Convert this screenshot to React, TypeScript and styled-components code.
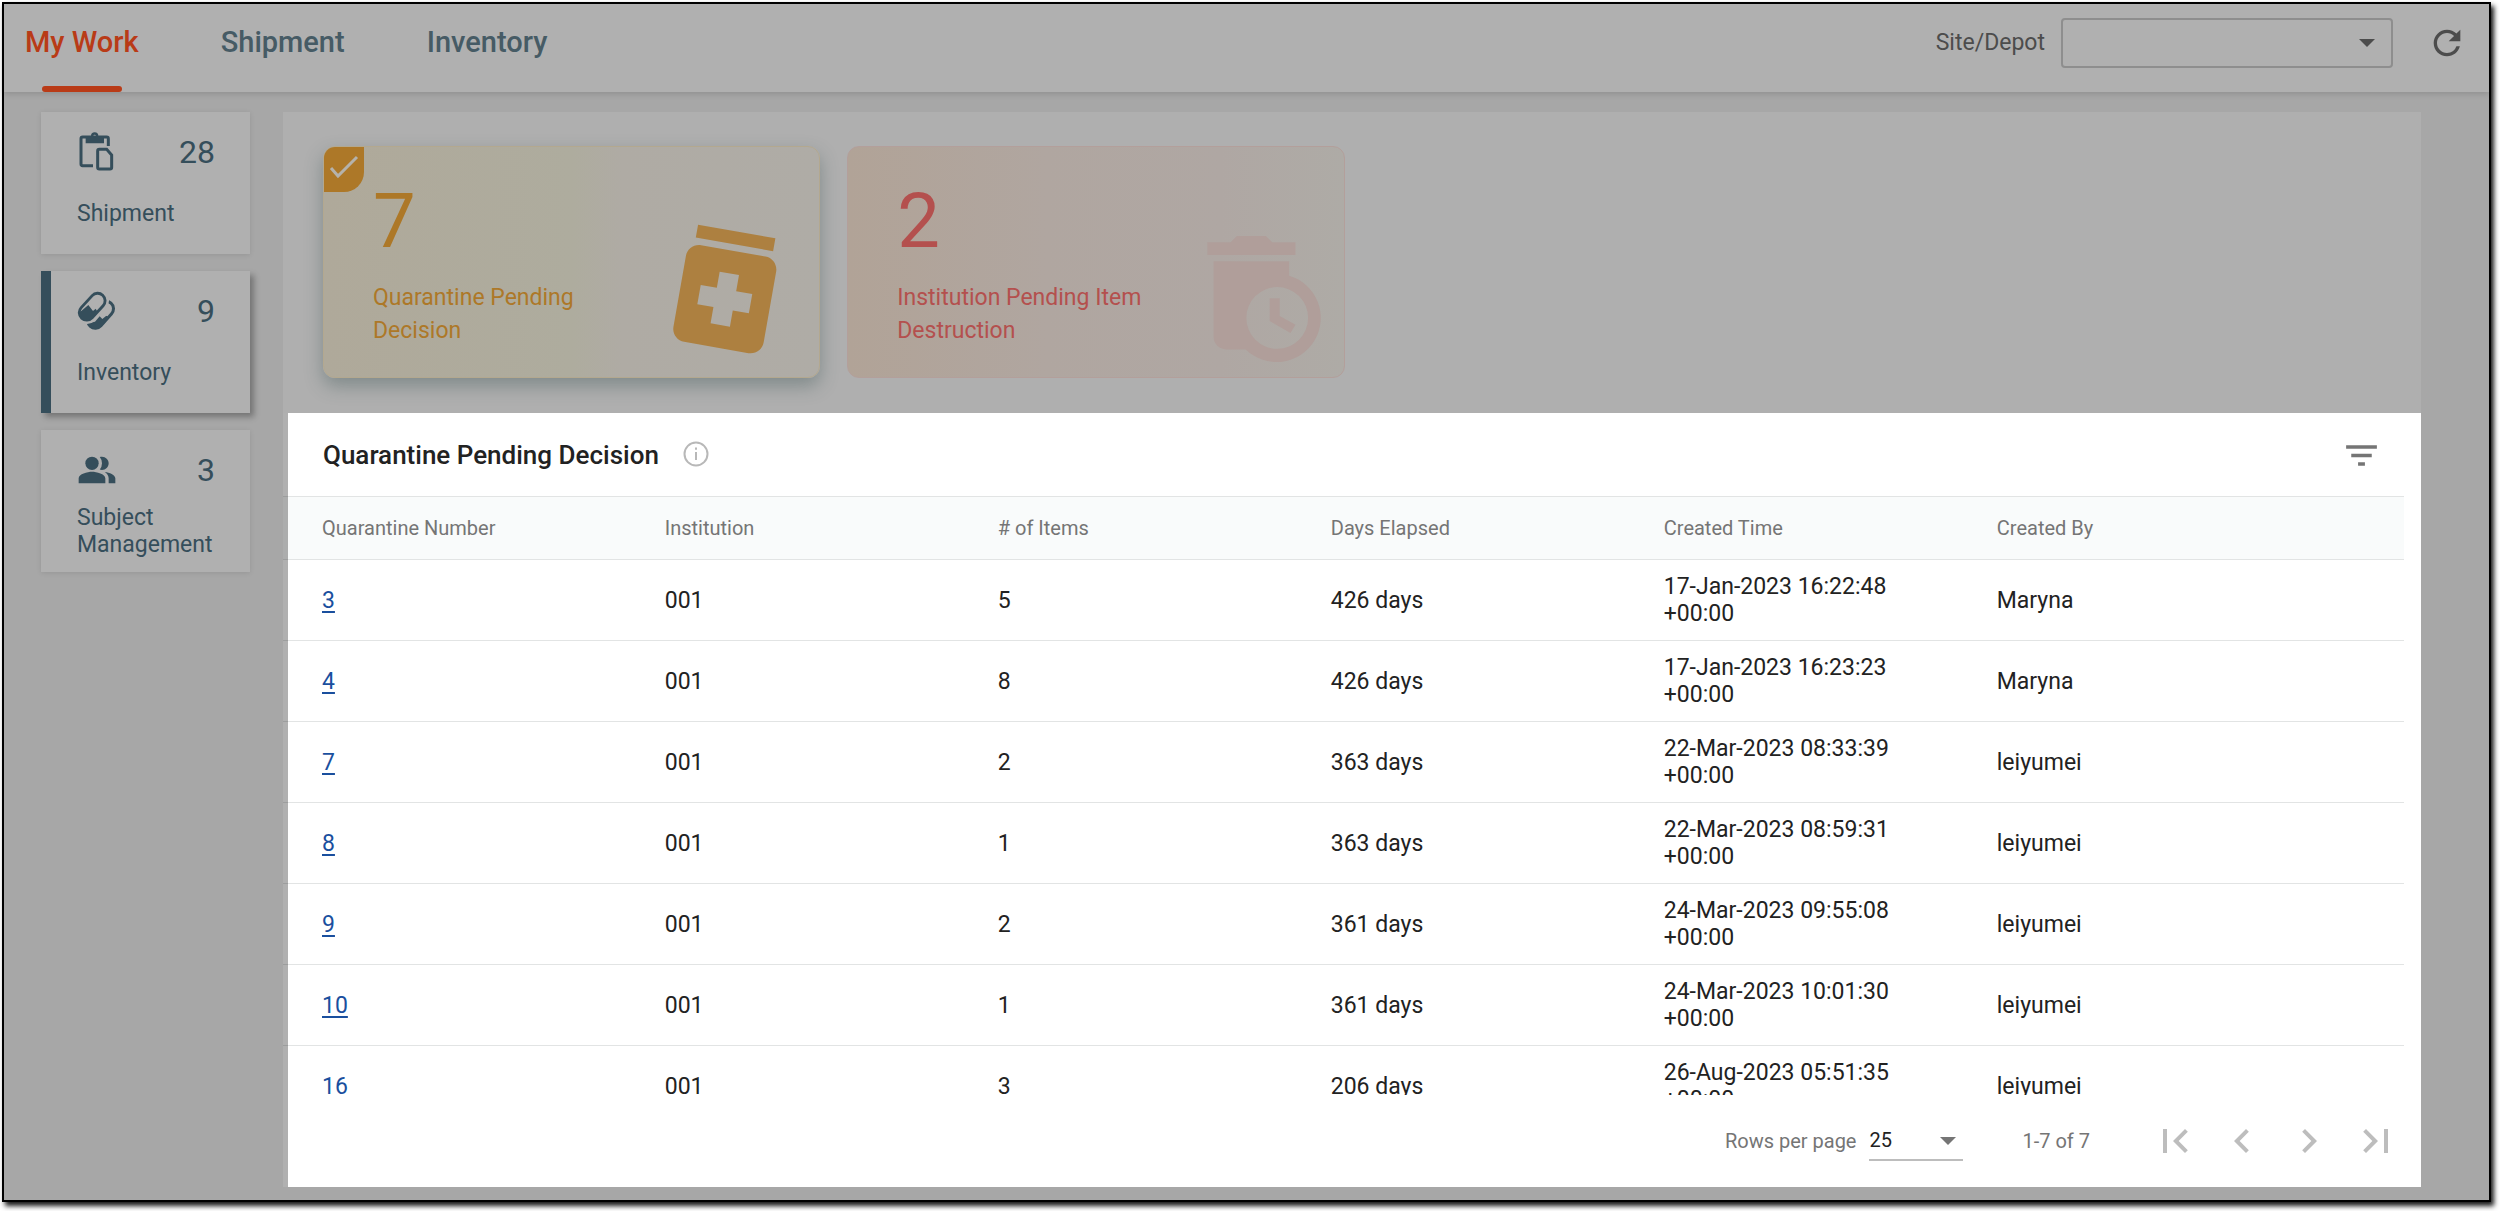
import { useState } from "react";
import styled, { createGlobalStyle, css } from "styled-components";
import {
  MdChevronLeft,
  MdChevronRight,
  MdFilterList,
  MdFirstPage,
  MdLastPage,
  MdPeopleAlt,
  MdRefresh,
} from "react-icons/md";

const colors = {
  page: "#a7a7a7",
  surface: "#b0b0b0",
  slate: "#354e5b",
  tab: "#465b65",
  active: "#b93b17",
  amber: "#ad7828",
  amberSoft: "#ad8040",
  red: "#b4504e",
  redSoft: "#b09e9a",
  text: "#222222",
  muted: "#757575",
  link: "#1a4f9e",
  line: "#e2e4e4",
};

const GlobalStyle = createGlobalStyle`
  * {
    box-sizing: border-box;
  }

  body {
    margin: 0;
    background: #ffffff;
    font-family: Roboto, "Liberation Sans", sans-serif;
    font-size: 23px;
    color: ${colors.text};
  }

  button, select {
    font: inherit;
    color: inherit;
    background: none;
    border: 0;
    padding: 0;
    text-align: left;
  }
`;

const Screen = styled.div`
  display: flex;
  height: 100vh;
  padding: 2px 9px 9px 2px;
`;

const Frame = styled.div`
  flex: 1;
  min-width: 0;
  display: flex;
  flex-direction: column;
  background: ${colors.page};
  border: 2px solid #000000;
  box-shadow: 3px 4px 5px rgba(0, 0, 0, 0.9);
`;

const Header = styled.header`
  position: relative;
  display: flex;
  justify-content: space-between;
  height: 88px;
  flex-shrink: 0;
  padding: 0 22px 0 21px;
  background: ${colors.surface};
  box-shadow: 0 2px 6px rgba(0, 0, 0, 0.14);
`;

const Tabs = styled.nav`
  display: flex;
  gap: 82px;
`;

const Tab = styled.a<{ $active?: boolean }>`
  display: flex;
  flex-direction: column;
  align-items: center;
  font-size: 29px;
  font-weight: 500;
  line-height: 77px;
  color: ${(props) => (props.$active ? colors.active : colors.tab)};
  text-decoration: none;
`;

const TabMarker = styled.span`
  width: 80px;
  height: 6px;
  margin-top: 5px;
  border-radius: 3px;
  background: ${colors.active};
`;

const Tools = styled.div`
  display: flex;
  align-items: center;
  height: 77px;
  color: #4c4c4c;
`;

const SelectWrapper = styled.span<{ $caret: string }>`
  position: relative;
  display: flex;

  svg {
    position: absolute;
    top: 50%;
    right: ${(props) => props.$caret};
    margin-top: -4px;
    pointer-events: none;
  }
`;

const SiteSelect = styled.select`
  appearance: none;
  width: 332px;
  height: 50px;
  margin-left: 16px;
  border: 2px solid #8e8e8e;
  border-radius: 4px;
`;

const IconButton = styled.button`
  display: flex;
  align-items: center;
  color: inherit;
`;

const RefreshButton = styled(IconButton)`
  margin-left: 34px;
`;

const Body = styled.div`
  flex: 1;
  min-height: 0;
  display: flex;
  gap: 33px;
  padding: 20px 68px 13px 37px;
`;

const Sidebar = styled.nav`
  display: flex;
  flex-direction: column;
  gap: 17px;
  width: 209px;
  flex-shrink: 0;
`;

const SideCard = styled.button<{ $selected?: boolean }>`
  height: 142px;
  padding: 20px 35px 14px 36px;
  background: ${colors.surface};
  color: ${colors.slate};
  box-shadow: 0 1px 5px rgba(0, 0, 0, 0.1);

  ${(props) =>
    props.$selected &&
    css`
      padding-left: 26px;
      border-left: 10px solid ${colors.slate};
      box-shadow: 4px 4px 6px rgba(0, 0, 0, 0.3);
    `}
`;

const SideTop = styled.span`
  display: flex;
  align-items: center;
  justify-content: space-between;
  height: 40px;
  font-size: 32px;
`;

const SideLabel = styled.span`
  display: flex;
  align-items: center;
  height: 54px;
  margin-top: 14px;
  line-height: 27px;
`;

const Panel = styled.main`
  flex: 1;
  min-width: 0;
  display: flex;
  flex-direction: column;
  background: #afafaf;
`;

const KpiRow = styled.div`
  display: grid;
  grid-template-columns: repeat(4, 1fr);
  gap: 27px;
  padding: 34px 28px 35px 40px;
`;

const KpiCard = styled.button<{ $tone: "amber" | "red"; $selected?: boolean }>`
  position: relative;
  display: flex;
  justify-content: space-between;
  align-items: flex-end;
  height: 232px;
  padding-left: 49px;
  overflow: hidden;
  border: 1px solid;
  border-radius: 12px;

  ${(props) =>
    props.$tone === "amber"
      ? css`
          color: ${colors.amber};
          border-color: #b3a88f;
          background: linear-gradient(90deg, #afa99a, #aeac9e 50%, #afaba4 60%, #afaca6);
        `
      : css`
          color: ${colors.red};
          border-color: #b39f9b;
          background: linear-gradient(90deg, #b1a397, #b0a6a0 40%, #afa7a3 75%, #aeaba6);
        `}

  ${(props) =>
    props.$selected &&
    css`
      box-shadow: 0 8px 18px rgba(60, 85, 85, 0.4);
    `}
`;

const KpiCheck = styled.span`
  position: absolute;
  top: -1px;
  left: -1px;
  display: flex;
  align-items: center;
  justify-content: center;
  width: 41px;
  height: 46px;
  padding-bottom: 4px;
  border-radius: 12px 0 20px 0;
  background: ${colors.amber};
`;

const KpiText = styled.span`
  align-self: flex-start;
  width: 260px;
  padding-top: 36px;
`;

const KpiCount = styled.span`
  display: block;
  font-size: 76px;
  line-height: 76px;
`;

const KpiLabel = styled.span`
  display: block;
  margin-top: 22px;
  line-height: 33px;
`;

const KpiArt = styled.span<{ $inset: string }>`
  display: flex;
  padding: ${(props) => props.$inset};
`;

const TableCard = styled.section`
  position: relative;
  flex: 1;
  min-height: 0;
  display: flex;
  flex-direction: column;
  background: #ffffff;

  &::before {
    content: "";
    position: absolute;
    inset: 0 auto 0 0;
    width: 5px;
    background: rgba(0, 0, 0, 0.31);
  }
`;

const TitleBar = styled.div`
  display: flex;
  align-items: center;
  height: 83px;
  flex-shrink: 0;
  padding: 0 39px 0 40px;
`;

const Title = styled.h2`
  margin: 0;
  font-size: 26px;
  font-weight: 500;
`;

const InfoButton = styled(IconButton)`
  margin-left: 24px;
  padding-bottom: 2px;
`;

const FilterButton = styled(IconButton)`
  margin-left: auto;
  padding-top: 2px;
  color: ${colors.muted};
`;

const TableScroll = styled.div`
  flex: 1;
  min-height: 0;
  overflow-y: auto;
  scrollbar-width: none;
  padding-right: 17px;
`;

const Table = styled.table`
  width: 100%;
  table-layout: fixed;
  border-collapse: separate;
  border-spacing: 0;
`;

const HeadCell = styled.th`
  height: 64px;
  padding: 0;
  border-top: 1px solid ${colors.line};
  border-bottom: 1px solid ${colors.line};
  background: #f9fbfb;
  font-size: 20px;
  font-weight: 400;
  text-align: left;
  color: ${colors.muted};

  &:first-child {
    width: 18%;
    padding-left: 39px;
  }

  &:last-child {
    width: 19.2%;
  }
`;

const Cell = styled.td`
  height: 81px;
  padding: 0 80px 0 0;
  border-bottom: 1px solid ${colors.line};
  line-height: 27px;

  &:first-child {
    padding-left: 39px;
  }
`;

const RowLink = styled.a`
  color: ${colors.link};
  text-decoration: underline;
  text-decoration-thickness: 2px;
  text-underline-offset: 3px;
`;

const Footer = styled.footer`
  display: flex;
  align-items: center;
  justify-content: flex-end;
  height: 92px;
  flex-shrink: 0;
  padding-right: 21px;
  font-size: 20px;
  color: ${colors.muted};
`;

const PageSizeSelect = styled.select`
  appearance: none;
  width: 94px;
  height: 40px;
  margin-left: 13px;
  border-bottom: 2px solid #bdbdbd;
  color: ${colors.text};
`;

const PageRange = styled.span`
  margin: 0 61px 0 59px;
`;

const Pager = styled.div`
  display: flex;
  gap: 19px;
  color: #bdbdbd;
`;

const Caret = ({ color }: { color: string }) => (
  <svg width="16" height="8" viewBox="0 0 16 8" aria-hidden="true">
    <path d="M0 0h16L8 8z" fill={color} />
  </svg>
);

const ShipmentIcon = () => (
  <svg width="39" height="40" viewBox="22 36 117 120" fill="none" aria-hidden="true">
    <g stroke="currentColor" strokeWidth="9">
      <path d="M116 78V56q0-5-5-5H39q-5 0-5 5v76q0 5 5 5h31" />
      <path d="M89 88h22l15 17v37q0 5-5 5H89q-5 0-5-5V93q0-5 5-5z" />
    </g>
    <path
      fill="currentColor"
      fillRule="evenodd"
      d="M48 48h16a11 11 0 0 1 22 0h17v22H48zM75 44a4 4 0 1 0 0 8 4 4 0 0 0 0-8z"
    />
  </svg>
);

const PillsIcon = () => (
  <svg width="39" height="40" viewBox="24 514 117 120" strokeLinecap="round" aria-hidden="true">
    <clipPath id="frontPill">
      <path d="M20 590L36 575L58 556L72 574L80 567L100 600L60 640L20 620z" />
    </clipPath>
    <clipPath id="backPill">
      <path d="M50 612L78 606L92 590L100 598L112 588L130 600L90 640L50 640z" />
    </clipPath>
    <path d="M79 603L111 567" stroke="currentColor" strokeWidth="54" />
    <path d="M79 603L111 567" stroke={colors.surface} strokeWidth="36" />
    <path d="M79 603L111 567" stroke="currentColor" strokeWidth="50" clipPath="url(#backPill)" />
    <path d="M53 579L86 543" stroke={colors.surface} strokeWidth="68" />
    <path d="M53 579L86 543" stroke="currentColor" strokeWidth="53" />
    <path d="M53 579L86 543" stroke={colors.surface} strokeWidth="36" />
    <path d="M53 579L86 543" stroke="currentColor" strokeWidth="48" clipPath="url(#frontPill)" />
  </svg>
);

const CheckIcon = () => (
  <svg width="30" height="24" viewBox="0 0 30 24" fill="none" aria-hidden="true">
    <path d="M2 13l7 8L28 2" stroke="#b5b2ab" strokeWidth="3" />
  </svg>
);

const BottleIcon = () => (
  <svg width="157" height="157" viewBox="0 0 24 24" aria-hidden="true">
    <path
      fill={colors.amberSoft}
      transform="rotate(10 12 12)"
      d="M6 3h12v2H6zm11 3H7c-1.1 0-2 .9-2 2v11c0 1.1.9 2 2 2h10c1.1 0 2-.9 2-2V8c0-1.1-.9-2-2-2zm-1 9h-2.5v2.5h-3V15H8v-3h2.5V9.5h3V12H16v3z"
    />
  </svg>
);

const BinClockIcon = () => (
  <svg width="114" height="126" viewBox="1 1 18 20" fill={colors.redSoft} aria-hidden="true">
    <path d="M1 2h3.7l1-1h4.6l1 1H15v2H1z" />
    <path
      fillRule="evenodd"
      d="M2 5h12v2.3A7 7 0 1 1 7.1 19H4c-1.1 0-2-.9-2-2zM12.1 9.1a4.9 4.9 0 1 0 0 9.8 4.9 4.9 0 0 0 0-9.8z"
    />
    <path d="M10.9 10.9h1.6v2.8l2.5 1.4-.8 1.3-3.3-1.9z" />
  </svg>
);

const InfoIcon = () => (
  <svg width="26" height="26" viewBox="0 0 26 26" fill="none" stroke="#b8b8b8" strokeWidth="2" aria-hidden="true">
    <circle cx="13" cy="13" r="11.5" />
    <path d="M13 11v8M13 6.5v2.2" />
  </svg>
);

const sideItems = [
  { label: "Shipment", count: 28, icon: <ShipmentIcon /> },
  { label: "Inventory", count: 9, icon: <PillsIcon /> },
  { label: "Subject Management", count: 3, icon: <MdPeopleAlt size={40} /> },
];

const columns = ["Quarantine Number", "Institution", "# of Items", "Days Elapsed", "Created Time", "Created By"];

const rows = [
  { id: 3, items: 5, days: 426, time: "17-Jan-2023 16:22:48 +00:00", by: "Maryna" },
  { id: 4, items: 8, days: 426, time: "17-Jan-2023 16:23:23 +00:00", by: "Maryna" },
  { id: 7, items: 2, days: 363, time: "22-Mar-2023 08:33:39 +00:00", by: "leiyumei" },
  { id: 8, items: 1, days: 363, time: "22-Mar-2023 08:59:31 +00:00", by: "leiyumei" },
  { id: 9, items: 2, days: 361, time: "24-Mar-2023 09:55:08 +00:00", by: "leiyumei" },
  { id: 10, items: 1, days: 361, time: "24-Mar-2023 10:01:30 +00:00", by: "leiyumei" },
  { id: 16, items: 3, days: 206, time: "26-Aug-2023 05:51:35 +00:00", by: "leiyumei" },
];

const App = () => {
  const [section, setSection] = useState("Inventory");

  return (
    <Screen>
      <GlobalStyle />
      <Frame>
        <Header>
          <Tabs>
            <Tab href="#my-work" $active>
              My Work
              <TabMarker />
            </Tab>
            <Tab href="#shipment">Shipment</Tab>
            <Tab href="#inventory">Inventory</Tab>
          </Tabs>
          <Tools>
            <label htmlFor="site">Site/Depot</label>
            <SelectWrapper $caret="18px">
              <SiteSelect id="site" />
              <Caret color="#4c4c4c" />
            </SelectWrapper>
            <RefreshButton aria-label="Refresh">
              <MdRefresh size={40} />
            </RefreshButton>
          </Tools>
        </Header>
        <Body>
          <Sidebar>
            {sideItems.map((item) => (
              <SideCard
                key={item.label}
                $selected={item.label === section}
                onClick={() => setSection(item.label)}
              >
                <SideTop>
                  {item.icon}
                  {item.count}
                </SideTop>
                <SideLabel>{item.label}</SideLabel>
              </SideCard>
            ))}
          </Sidebar>
          <Panel>
            <KpiRow>
              <KpiCard $tone="amber" $selected>
                <KpiCheck>
                  <CheckIcon />
                </KpiCheck>
                <KpiText>
                  <KpiCount>7</KpiCount>
                  <KpiLabel>Quarantine Pending Decision</KpiLabel>
                </KpiText>
                <KpiArt $inset="0 14px 9px 0">
                  <BottleIcon />
                </KpiArt>
              </KpiCard>
              <KpiCard $tone="red">
                <KpiText>
                  <KpiCount>2</KpiCount>
                  <KpiLabel>Institution Pending Item Destruction</KpiLabel>
                </KpiText>
                <KpiArt $inset="0 23px 15px 0">
                  <BinClockIcon />
                </KpiArt>
              </KpiCard>
            </KpiRow>
            <TableCard>
              <TitleBar>
                <Title>Quarantine Pending Decision</Title>
                <InfoButton aria-label="About this list">
                  <InfoIcon />
                </InfoButton>
                <FilterButton aria-label="Filter">
                  <MdFilterList size={41} />
                </FilterButton>
              </TitleBar>
              <TableScroll>
                <Table>
                  <thead>
                    <tr>
                      {columns.map((column) => (
                        <HeadCell key={column}>{column}</HeadCell>
                      ))}
                    </tr>
                  </thead>
                  <tbody>
                    {rows.map((row) => (
                      <tr key={row.id}>
                        <Cell>
                          <RowLink href={`#quarantine-${row.id}`}>{row.id}</RowLink>
                        </Cell>
                        <Cell>001</Cell>
                        <Cell>{row.items}</Cell>
                        <Cell>{row.days} days</Cell>
                        <Cell>{row.time}</Cell>
                        <Cell>{row.by}</Cell>
                      </tr>
                    ))}
                  </tbody>
                </Table>
              </TableScroll>
              <Footer>
                <label htmlFor="pageSize">Rows per page</label>
                <SelectWrapper $caret="7px">
                  <PageSizeSelect id="pageSize" defaultValue="25">
                    <option value="25">25</option>
                    <option value="50">50</option>
                  </PageSizeSelect>
                  <Caret color={colors.muted} />
                </SelectWrapper>
                <PageRange>1-7 of 7</PageRange>
                <Pager>
                  <IconButton aria-label="First page">
                    <MdFirstPage size={48} />
                  </IconButton>
                  <IconButton aria-label="Previous page">
                    <MdChevronLeft size={48} />
                  </IconButton>
                  <IconButton aria-label="Next page">
                    <MdChevronRight size={48} />
                  </IconButton>
                  <IconButton aria-label="Last page">
                    <MdLastPage size={48} />
                  </IconButton>
                </Pager>
              </Footer>
            </TableCard>
          </Panel>
        </Body>
      </Frame>
    </Screen>
  );
};

export default App;
